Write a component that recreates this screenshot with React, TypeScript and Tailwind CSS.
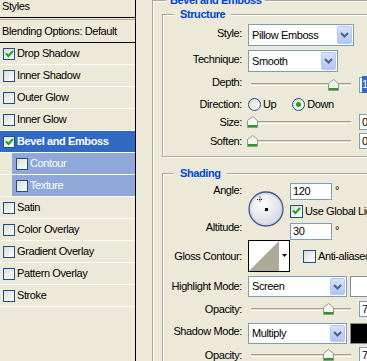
import type { CSSProperties, ReactNode } from 'react'

// Photoshop "Layer Style" dialog, XP look: effect list on the left, Bevel and Emboss panel on the right.

const effects = [
  { label: 'Drop Shadow', checked: true },
  { label: 'Inner Shadow' },
  { label: 'Outer Glow' },
  { label: 'Inner Glow' },
  { label: 'Bevel and Emboss', checked: true, selected: true },
  { label: 'Contour', sub: true },
  { label: 'Texture', sub: true },
  { label: 'Satin' },
  { label: 'Color Overlay' },
  { label: 'Gradient Overlay' },
  { label: 'Pattern Overlay' },
  { label: 'Stroke' },
]

function Check({ checked, big }: { checked?: boolean; big?: boolean }) {
  return (
    <span
      className={`flex shrink-0 items-center justify-center border border-[#1C5180] bg-linear-to-br from-[#DCDCD5] to-white ${
        big ? 'h-[13px] w-[13px]' : 'h-[12px] w-[12px]'
      }`}
    >
      {checked && (
        <svg width="9" height="8" viewBox="0 0 9 8">
          <path d="M1 3.5 L3.5 6 L8 1" fill="none" stroke="#21A121" strokeWidth="2" />
        </svg>
      )}
    </span>
  )
}

function Radio({ on }: { on?: boolean }) {
  return (
    <span className="flex h-[13px] w-[13px] shrink-0 items-center justify-center rounded-full border border-[#1C5180] bg-linear-to-br from-[#DCDCD5] to-white">
      {on && <span className="h-[5px] w-[5px] rounded-full bg-[#21A121]" />}
    </span>
  )
}

function Select({ value, className }: { value: string; className: string }) {
  return (
    <div className={`flex shrink-0 items-stretch border border-[#7F9DB9] bg-white p-px ${className}`}>
      <span className="flex flex-1 items-center pl-[2px]">{value}</span>
      <span className="flex w-[15px] items-center justify-center rounded-[2px] border border-[#B4C7F2] bg-linear-to-b from-[#D6E2FD] to-[#B1C6F5]">
        <svg width="9" height="6" viewBox="0 0 9 6">
          <path d="M1 1 L4.5 4.5 L8 1" fill="none" stroke="#4D6185" strokeWidth="2" />
        </svg>
      </span>
    </div>
  )
}

function Field({ value, className }: { value: ReactNode; className: string }) {
  return (
    <div className={`flex shrink-0 items-center border border-[#7F9DB9] bg-white pl-[2px] ${className}`}>
      {value}
    </div>
  )
}

function Thumb({ style }: { style: CSSProperties }) {
  return (
    <svg className="absolute top-[2px]" style={style} width="11" height="12" viewBox="0 0 11 12">
      <path d="M0.5 4.5 L5.5 0.5 L10.5 4.5 V11.5 H0.5 Z" fill="#F7F7F2" stroke="#8E9A8A" />
      <rect x="1" y="9" width="9" height="2" fill="#1F9E1F" />
    </svg>
  )
}

function Slider({ at, value }: { at: number; value: ReactNode }) {
  return (
    <>
      <div className="relative flex h-[16px] w-[106px] shrink-0 items-center">
        <div className="mx-[3px] h-[3px] flex-1 border-t border-b border-t-[#A29F91] border-b-white bg-[#DEDBCB]" />
        <Thumb style={{ left: at }} />
      </div>
      <Field value={value} className="ml-[5px] h-[16px] w-[42px]" />
    </>
  )
}

function Row({
  label,
  className,
  lift,
  children,
}: {
  label: string
  className: string
  lift?: boolean
  children: ReactNode
}) {
  return (
    <div className={`flex items-center ${className}`}>
      <div className={`w-[79px] shrink-0 text-right ${lift ? 'pb-[4px]' : ''}`}>{label}</div>
      <div className="ml-[6px] flex h-full items-center">{children}</div>
    </div>
  )
}

function Group({ title, className, children }: { title: string; className: string; children: ReactNode }) {
  return (
    <fieldset
      className={`shrink-0 border border-[#ACA899] shadow-[inset_1px_1px_0_#fff,1px_1px_0_#fff] ${className}`}
    >
      <legend className="ml-[11px] bg-[#ECE9D8] px-[6px] leading-[15px] font-bold text-[#0046D5]">{title}</legend>
      {children}
    </fieldset>
  )
}

function Dial() {
  return (
    <svg width="36" height="36" viewBox="0 0 36 36">
      <defs>
        <radialGradient id="dial" cx="40%" cy="35%" r="70%">
          <stop offset="0" stopColor="#ffffff" />
          <stop offset="1" stopColor="#D4D6DE" />
        </radialGradient>
      </defs>
      <circle cx="18" cy="18" r="17" fill="url(#dial)" stroke="#41598A" strokeWidth="1.3" />
      <circle cx="18" cy="18" r="15.6" fill="none" stroke="#C9D1DE" />
      <rect x="17" y="17" width="3" height="3" fill="#000" />
      <path d="M9 8.5 H15 M12 5.5 V11.5" stroke="#000" strokeDasharray="1 1" />
    </svg>
  )
}

export default function App() {
  return (
    <div className="flex h-[361px] w-[367px] overflow-hidden whitespace-nowrap bg-[#ECE9D8] font-['Liberation_Sans',Arial,sans-serif] text-[11px] tracking-[-0.4px] text-black">
      {/* effect list */}
      <div className="flex w-[136px] shrink-0 flex-col border-r border-black">
        <div className="h-[17px] pl-[2px] leading-[13px]">Styles</div>
        <div className="h-[3px] border-t border-b border-t-black border-b-[#ACA899]" />
        <div className="flex h-[23px] items-center border-b border-black pl-[2px]">Blending Options: Default</div>
        {effects.map((e) =>
          e.sub ? (
            <div key={e.label} className="flex h-[22px] border-b border-white">
              <div className="ml-[12px] flex flex-1 items-center bg-[#8FA8D9] pl-[4px] text-white">
                <Check checked={e.checked} />
                <span className="ml-[2px]">{e.label}</span>
              </div>
            </div>
          ) : (
            <div
              key={e.label}
              className={`flex h-[22px] items-center border-b border-white pl-[3px] ${
                e.selected ? 'bg-[#316AC5] font-bold text-white' : ''
              }`}
            >
              <Check checked={e.checked} />
              <span className="ml-[2px]">{e.label}</span>
            </div>
          ),
        )}
      </div>

      {/* options */}
      <div className="min-w-0 flex-1 pl-[16px]">
        <fieldset className="-mt-[7px] w-[280px] border border-[#ACA899] pl-[9px] shadow-[inset_1px_1px_0_#fff]">
          <legend className="ml-[4px] bg-[#ECE9D8] px-[4px] leading-[15px] font-bold text-[#0046D5]">
            Bevel and Emboss
          </legend>

          <Group title="Structure" className="-mt-[1px] w-[260px] pt-[2px] pb-[7px]">
            <Row label="Style:" className="h-[22px]" lift>
              <Select value="Pillow Emboss" className="h-[22px] w-[106px]" />
            </Row>
            <Row label="Technique:" className="mt-[4px] h-[22px]" lift>
              <Select value="Smooth" className="h-[22px] w-[90px]" />
            </Row>
            <Row label="Depth:" className="mt-[4px] h-[17px]" lift>
              <Slider at={80} value={<span className="bg-[#316AC5] text-white">100</span>} />
            </Row>
            <Row label="Direction:" className="mt-[3px] h-[16px]">
              <Radio />
              <span className="ml-[2px]">Up</span>
              <span className="ml-[16px]">
                <Radio on />
              </span>
              <span className="ml-[2px]">Down</span>
            </Row>
            <Row label="Size:" className="mt-[2px] h-[16px]">
              <Slider at={-1} value="0" />
            </Row>
            <Row label="Soften:" className="mt-[3px] h-[16px]">
              <Slider at={-1} value="0" />
            </Row>
          </Group>

          <Group title="Shading" className="mt-[9px] w-[260px] pt-[2px] pb-[4px]">
            <div className="flex h-[53px]">
              <div className="w-[79px] shrink-0 text-right leading-[14px]">
                <div>Angle:</div>
                <div className="mt-[23px]">Altitude:</div>
              </div>
              <div className="ml-[6px] mt-[8px]">
                <Dial />
              </div>
              <div className="ml-[6px] flex flex-col">
                <div className="flex">
                  <Field value="120" className="h-[17px] w-[42px]" />
                  <span className="ml-[3px] leading-[14px]">°</span>
                </div>
                <div className="mt-[3px] flex items-center">
                  <Check checked big />
                  <span className="ml-[2px]">Use Global Light</span>
                </div>
                <div className="mt-[3px] flex">
                  <Field value="30" className="h-[17px] w-[42px]" />
                  <span className="ml-[3px] leading-[14px]">°</span>
                </div>
              </div>
            </div>
            <Row label="Gloss Contour:" className="mt-[4px] h-[32px]">
              <svg width="42" height="32" viewBox="0 0 42 32">
                <rect x="0.5" y="0.5" width="41" height="31" fill="#fff" stroke="#000" />
                <path d="M1 31 L31 1 V31 Z" fill="#AEAA99" />
                <path d="M34 14 H39 L36.5 17 Z" fill="#000" />
              </svg>
              <span className="ml-[13px]">
                <Check big />
              </span>
              <span className="ml-[2px]">Anti-aliased</span>
            </Row>
            <Row label="Highlight Mode:" className="mt-[4px] h-[21px]">
              <Select value="Screen" className="h-[21px] w-[99px]" />
              <div className="ml-[3px] h-[21px] w-[40px] border border-[#8C8C8C] bg-white" />
            </Row>
            <Row label="Opacity:" className="mt-[4px] h-[16px]">
              <Slider at={75} value="75" />
            </Row>
            <Row label="Shadow Mode:" className="mt-[6px] h-[21px]" lift>
              <Select value="Multiply" className="h-[21px] w-[99px]" />
              <div className="ml-[3px] h-[21px] w-[40px] border border-[#8C8C8C] bg-black" />
            </Row>
            <Row label="Opacity:" className="mt-[3px] h-[16px]">
              <Slider at={75} value="75" />
            </Row>
          </Group>
        </fieldset>
      </div>
    </div>
  )
}
